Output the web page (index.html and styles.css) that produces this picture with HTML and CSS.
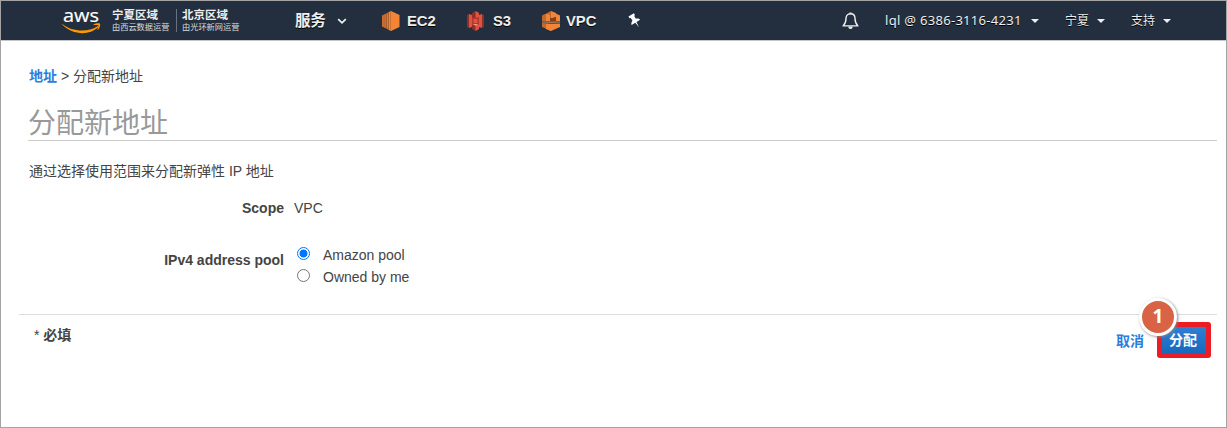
FILE: index.html
```html
<!DOCTYPE html>
<html lang="zh-CN">
<head>
<meta charset="utf-8">
<title>分配新地址</title>
<link rel="stylesheet" href="styles.css">
</head>
<body>
<header class="topbar">
  <svg class="logo" viewBox="0 0 40 32" width="40" height="32">
    <text class="logo-text" x="1" y="17" textLength="36" lengthAdjust="spacingAndGlyphs">aws</text>
    <g transform="translate(0 3)" fill="#f90">
      <path d="M.2 16C10 24 26 24.500 35.500 18.200c.8-.6 1.500.2.700 1C27 28 10.500 27 .1 16.500z"/>
      <path d="M31.500 16.500c2-1.500 6-1.500 6.500-.8s0 4-2 6c-.5.300-.8.100-.5-.4.600-1.500 1.200-3.500.8-4-.6-.6-3-.4-4.300-.3-.6 0-.7-.2-.5-.5z"/>
    </g>
  </svg>
  <div class="region"><b>宁夏区域</b><span>由西云数据运营</span></div>
  <i class="divider"></i>
  <div class="region"><b>北京区域</b><span>由光环新网运营</span></div>
  <nav class="services">
    <a class="menu">服务</a>
    <svg class="chevron" width="10" height="7" viewBox="0 0 10 7"><path d="M1.200 1.200 5 4.800l3.800-3.600" fill="none" stroke="#eee" stroke-width="1.800"/></svg>
    <svg class="icon-ec2" width="18" height="20" viewBox="0 0 18 20">
      <path d="M0 4.500 6.500 1v18L0 15.500z" fill="#9d5025"/>
      <path d="M.5 4.300h1v11.400h-1zM2.600 3.300h1v13.400h-1zM4.800 2.500h1v15h-1z" fill="#f58536"/>
      <path d="M6.500 1.300 9 0l8.500 4v12L9 20l-2.500-1.300z" fill="#f58536"/>
      <path d="M8.500 1v18" stroke="#c16a2d" stroke-width=".8"/>
    </svg>
    <a class="svc ec2">EC2</a>
    <svg class="icon-s3" width="17" height="20" viewBox="0 0 17 20">
      <path d="M0 4 2 3v14l-2-1zM17 4l-2-1v14l2-1z" fill="#8c3123"/>
      <path d="M2 3 5 4v12l-3 1zM15 3l-3 1v12l3 1z" fill="#e05243"/>
      <path d="M5 6h7v8H5z" fill="#b3382b"/>
      <path d="M5 2 8.500 0 12 2v4L8.500 7 5 6zM5 14l3.500-1 3.500 1v4l-3.500 2L5 18z" fill="#8c3123"/>
      <path d="M8.500 0 12 2v4L8.500 7zM8.500 13l3.500 1v4l-3.500 2zM6.500 8h4v4h-4z" fill="#e05243"/>
      <path d="m5.500 13.700 3-.7 3 .7-3 .8z" fill="#efaaa2"/>
    </svg>
    <a class="svc s3">S3</a>
    <svg class="icon-vpc" width="18" height="20" viewBox="0 0 18 20">
      <path d="M0 4.500 4 2.500V10H0zM5 2 9 0v7l-4 2z" fill="#c16a2d"/>
      <path d="m4 2.500 4 1.500V10H4zM9 0l5 2v4L9 7.500zM14 2.500l4 2V10h-4z" fill="#f58536"/>
      <path d="M8 7h6v3H8z" fill="#7f421f"/>
      <path d="M0 12h9v8l-9-4z" fill="#c16a2d"/>
      <path d="M4 12.500h14V16l-9 4-5-2z" fill="#f58536"/>
      <path d="M0 12 9 11l9 1-9 1z" fill="#7f421f"/>
      <path d="M0 11h18" stroke="#fbcfa9" stroke-width=".7"/>
    </svg>
    <a class="svc vpc">VPC</a>
    <svg class="pin" width="14" height="16" viewBox="0 0 14 16"><path transform="rotate(-32 7 8)" d="M3.800.8h6.400v2L9 3.300v3.200c1.700.6 2.900 1.700 3 3.200H7.700L7 15.500l-.7-5.800H2c.1-1.500 1.300-2.600 3-3.200V3.300l-1.200-.5z" fill="#fff"/></svg>
  </nav>
  <div class="account">
    <svg class="bell" width="17" height="18" viewBox="0 0 17 18"><path d="M8.500 1.800C5.500 1.800 4 4 4 6.500c0 4-1 5.500-2.900 7.400h14.800C14 12 13 10.500 13 6.500c0-2.500-1.500-4.700-4.500-4.700z" fill="none" stroke="#eee" stroke-width="1.400" stroke-linejoin="round"/><path d="M7.500.5h2v1.800h-2zM6.200 14.500h4.600c-.2 1.700-1 2.500-2.300 2.500s-2.100-.8-2.300-2.500z" fill="#eee"/></svg>
    <a class="user">lql @ 6386-3116-4231</a><i class="caret"></i>
    <a class="zone">宁夏</a><i class="caret"></i>
    <a class="zone">支持</a><i class="caret"></i>
  </div>
</header>
<main class="page">
  <div class="crumbs"><a>地址</a> &gt; 分配新地址</div>
  <h1>分配新地址</h1>
  <p class="intro">通过选择使用范围来分配新弹性 IP 地址</p>
  <div class="field scope"><b>Scope</b><span>VPC</span></div>
  <div class="field pool"><b>IPv4 address pool</b>
    <div class="options">
      <label><i class="radio checked"></i>Amazon pool</label>
      <label><i class="radio"></i>Owned by me</label>
    </div>
  </div>
  <footer class="actions">
    <div class="required">* <b>必填</b></div>
    <a class="cancel">取消</a>
    <div class="target"><button class="allocate">分配</button><span class="step">1</span></div>
  </footer>
</main>
</body>
</html>
```
FILE: styles.css
```css
* { box-sizing: border-box; }
body {
  margin: 0;
  height: 428px;
  overflow: hidden;
  border: 1px solid #a3a3a3;
  background: #fff;
  color: #444;
  font: 14px/20px "Liberation Sans", "Noto Sans CJK SC", sans-serif;
}
svg, i { display: block; flex: none; }
.topbar {
  display: flex;
  align-items: center;
  height: 40px;
  padding-left: 61px;
  background: #232f3e;
  border-bottom: 1px solid #c4c7c9;
  color: #eee;
  white-space: nowrap;
}
.logo { overflow: visible; }
.logo-text { font: 500 19px/20px "Open Sans", "Noto Sans", sans-serif; fill: #fff; stroke: #fff; stroke-width: .2px; }
.region { width: 57px; margin-left: 10px; padding-top: 1px; display: flex; flex-direction: column; }
.region b { font-size: 11.500px; line-height: 13px; font-weight: 700; }
.region span { font-size: 8.200px; line-height: 12px; color: #d8dbde; }
.divider { width: 1px; height: 23px; margin-left: 7px; background: #68717c; }
.divider + .region { margin-left: 5px; }
.services { display: flex; align-items: center; margin-left: 56px; font-weight: bold; text-shadow: 0 1px 0 #000; }
.menu { width: 31px; font-size: 15.500px; letter-spacing: -.3px; }
.chevron { margin-left: 11px; margin-top: 1px; }
.icon-ec2 { margin-left: 35px; }
.svc { margin-left: 7px; font-size: 14.800px; }
.ec2 { width: 30px; }
.icon-s3 { margin-left: 30px; }
.s3 { width: 18px; margin-left: 9px; }
.icon-vpc { margin-left: 31px; }
.vpc { width: 31px; margin-left: 6px; }
.pin { margin-left: 31px; }
.account { display: flex; align-items: center; margin-left: auto; padding-right: 55px; text-shadow: 0 1px 0 #000; }
.bell { margin-right: 26px; }
.user { width: 138px; font: 13px/18px "Noto Sans", sans-serif; letter-spacing: .3px; margin-top: -1px; }
.zone { width: 24px; margin-left: 26px; font-size: 12px; }
.caret { width: 8px; height: 4px; margin-left: 8px; margin-top: 1px; background: #eee; clip-path: polygon(0 0, 100% 0, 50% 100%); }
.page { padding: 25px 9px 0 27px; }
.crumbs { margin-left: 1px; }
.crumbs a { color: #2b7de0; font-weight: 700; }
h1 { height: 45px; margin: 10px 0 0; padding-top: 8px; border-bottom: 1px solid #ccc; color: #999; font-size: 28px; line-height: 39px; font-weight: 400; }
.intro { margin: 20px 0 0 1px; }
.field { display: grid; grid-template-columns: 256px 1fr; column-gap: 10px; }
.field b { text-align: right; }
.scope { margin-top: 17px; }
.pool { margin-top: 27px; }
.pool b { padding-top: 5px; }
.options { padding-left: 3px; }
.options label { display: flex; align-items: flex-start; height: 22px; line-height: 20px; }
.radio { width: 13px; height: 13px; margin: 2px 13px 0 0; border: 1px solid #767676; border-radius: 50%; }
.radio.checked { border-color: #0075ff; background: radial-gradient(circle, #0075ff 3.700px, #fff 4.300px); }
.actions { display: flex; align-items: flex-start; height: 60px; margin: 25px 0 0 -9px; border-top: 1px solid #ddd; }
.required { margin: 10px auto 0 15px; }
.cancel { margin: 16px 13px 0 0; color: #2b7de0; font-weight: 700; }
.target { position: relative; width: 54px; height: 36px; margin: 7px 6px 0 0; padding: 5px; background: #ed1b24; border-radius: 3px; }
.allocate { display: block; width: 44px; height: 26px; padding: 0 2px 0 0; border: 0; background: linear-gradient(#2f7fd4, #1769bd); color: #fff; font: bold 14px/27px "Liberation Sans", "Noto Sans CJK SC", sans-serif; }
.cancel { margin-right: 12px; padding-right: 1px; }
.step { position: absolute; left: -18px; top: -24px; width: 38px; height: 38px; border: 3px solid #fff; border-radius: 50%; background: #d96345; box-shadow: 1px 1px 3px #888; color: #fff; font: bold 19px/30px "Open Sans", sans-serif; text-align: center; }
```
